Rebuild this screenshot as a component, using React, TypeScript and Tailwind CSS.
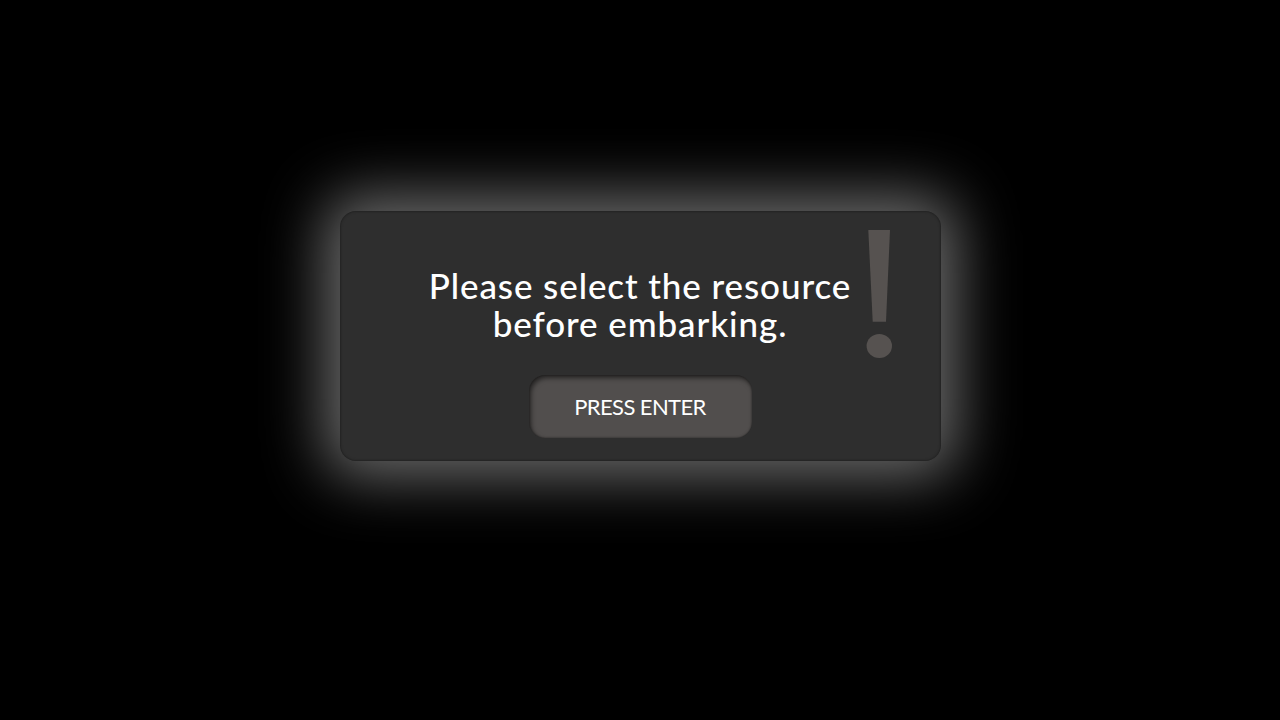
export default function App() {
  return (
    <div className="flex min-h-screen w-full flex-col items-center bg-black pt-[211px] font-['Lato','Open_Sans',sans-serif]">
      <div className="relative flex h-[250px] w-[601px] flex-col items-center rounded-[16px] bg-[#2e2e2e] pt-[55px] shadow-[0_0_60px_16px_rgba(255,255,255,0.42),inset_0_0_3px_rgba(0,0,0,0.5)]">
        <svg
          className="absolute right-[48px] top-[18px]"
          width="27"
          height="130"
          viewBox="0 0 27 130"
          aria-hidden="true"
        >
          <polygon points="2.3,1 24,1 20,92.7 6.7,92.7" fill="#565250" />
          <ellipse cx="13.3" cy="117" rx="12.7" ry="12" fill="#565250" />
        </svg>

        <p className="text-center text-[35px] font-medium leading-[38px] tracking-[0.9px] text-white">
          Please select the resource
          <br />
          before embarking.
        </p>

        <button className="mt-[33px] flex h-[63px] w-[223px] items-center justify-center rounded-[16px] bg-[#514e4d] text-[22px] leading-none tracking-[-0.6px] text-white shadow-[inset_2px_3px_5px_rgba(0,0,0,0.55),inset_0_0_2px_rgba(0,0,0,0.5)]">
          PRESS ENTER
        </button>
      </div>
    </div>
  );
}
